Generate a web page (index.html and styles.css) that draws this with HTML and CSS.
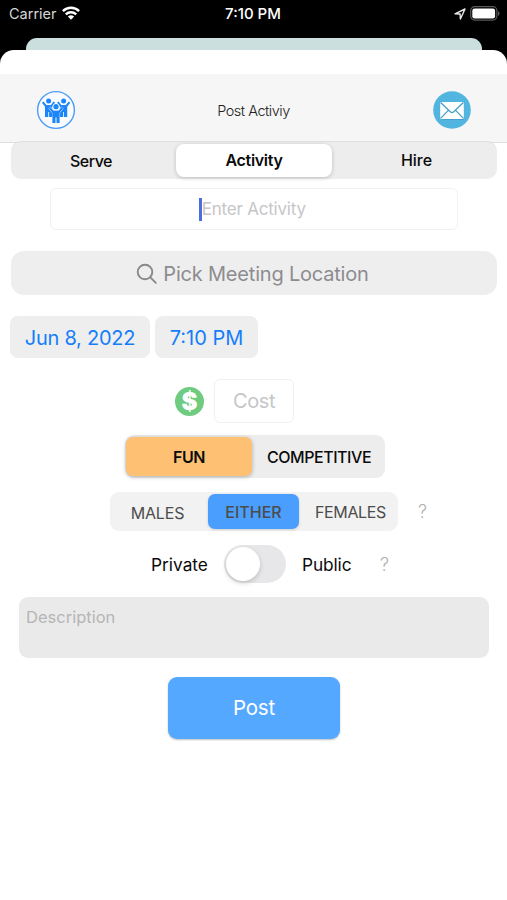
FILE: index.html
```html
<!DOCTYPE html>
<html lang="en">
<head>
<meta charset="utf-8">
<meta name="viewport" content="width=device-width, initial-scale=1">
<title>Post Activiy</title>
<link rel="stylesheet" href="styles.css">
</head>
<body>
<div class="status">
  <div class="status-left">
    <span class="carrier">Carrier</span>
    <svg class="wifi" viewBox="0 0 18 14" width="18" height="14">
      <g fill="none" stroke="#fff" stroke-width="2.4">
        <path d="M.9 5.1a11.6 11.6 0 0 1 16.2 0"/>
        <path d="M3.8 8.3a7.5 7.5 0 0 1 10.4 0"/>
      </g>
      <path d="M9 13.8 5.9 10.6a4.5 4.5 0 0 1 6.2 0z" fill="#fff"/>
    </svg>
  </div>
  <span class="clock">7:10 PM</span>
  <div class="status-right">
    <svg viewBox="0 0 12 12" width="12" height="12"><path d="M1 5.8 11 1 6.4 11 6.1 6z" fill="none" stroke="#e8e8e8" stroke-width="1.4" stroke-linejoin="round"/></svg>
    <svg viewBox="0 0 30 15" width="30" height="15">
      <rect x=".7" y=".7" width="26.2" height="13.4" rx="4" fill="none" stroke="#5a5a5a" stroke-width="1.2"/>
      <rect x="2.3" y="2.5" width="22.8" height="10" rx="2.3" fill="#fff"/>
      <path d="M28 5a2.8 2.8 0 0 1 0 5z" fill="#5a5a5a"/>
    </svg>
  </div>
</div>
<div class="card-behind"></div>
<main class="sheet">
  <header class="navbar">
    <svg class="people" viewBox="0 0 40 40" width="40" height="40">
      <circle cx="20" cy="20" r="18.4" fill="#f9fbfe" stroke="#4a9cf7" stroke-width="1.4"/>
      <g fill="#1b86f9" stroke="#1b86f9">
        <circle cx="12.6" cy="11" r="2.5" stroke="none"/>
        <circle cx="27.6" cy="11" r="2.5" stroke="none"/>
        <path d="M6.7 12.2 10 16.2h5.4l3-4M33.5 12.2l-3.3 4h-5.4l-3-4" fill="none" stroke-width="2"/>
        <path d="M9 15.3h7.3V27h-3.2v-5h-.8v5H9zM23.9 15.3h7.3V27H28v-5h-.8v5h-3.3z" stroke="none"/>
      </g>
      <circle cx="20" cy="16.7" r="3.5" fill="#fff"/>
      <circle cx="20" cy="16.7" r="2.6" fill="#1b86f9"/>
      <path d="m13.5 17.6 3.6 4.2h5.8l3.6-4.2" fill="none" stroke="#d6e8fd" stroke-width="3"/>
      <path d="m13.5 17.6 3.6 4.2h5.8l3.6-4.2" fill="none" stroke="#1b86f9" stroke-width="2"/>
      <path d="M16.4 20.9h7.2v12.2h-3.1v-5.5h-1v5.5h-3.1z" fill="#1b86f9"/>
    </svg>
    <h1 class="title">Post Activiy</h1>
    <svg class="mail" viewBox="0 0 38 38" width="38" height="38">
      <circle cx="19" cy="19" r="18.8" fill="#52b5e0"/>
      <path d="M9 26.5h22v2.6H11z" fill="#449fd0"/>
      <rect x="7.2" y="11" width="23.6" height="17" rx=".8" fill="#fff"/>
      <path d="m7.6 11.5 9.7 9.3q1.7 1.4 3.4 0l9.7-9.3M7.6 27.4l7.5-7.8M30.4 27.4l-7.5-7.8" fill="none" stroke="#459fcc" stroke-width="1.3"/>
    </svg>
  </header>
  <nav class="tabs">
    <span class="tab serve">Serve</span>
    <span class="tab selected">Activity</span>
    <span class="tab hire">Hire</span>
  </nav>
  <div class="activity-field"><i class="caret"></i><span>Enter Activity</span></div>
  <div class="search">
    <svg viewBox="0 0 22 22" width="22" height="22"><g fill="none" stroke="#88888c" stroke-width="1.9" stroke-linecap="round"><circle cx="9" cy="9" r="7.3"/><path d="m14.4 14.4 5.4 5.4"/></g></svg>
    <span>Pick Meeting Location</span>
  </div>
  <div class="datetime">
    <span class="chip date">Jun 8, 2022</span>
    <span class="chip time">7:10 PM</span>
  </div>
  <div class="cost-row">
    <span class="dollar">$</span>
    <div class="cost-field">Cost</div>
  </div>
  <div class="mode">
    <span class="mode-on">FUN</span>
    <span class="mode-off">COMPETITIVE</span>
  </div>
  <div class="gender-row">
    <div class="gender">
      <span class="g-cell males">MALES</span>
      <span class="g-cell either">EITHER</span>
      <span class="g-cell females">FEMALES</span>
    </div>
    <span class="help">?</span>
  </div>
  <div class="privacy-row">
    <span class="private">Private</span>
    <span class="switch"><i class="knob"></i></span>
    <span class="public">Public</span>
    <span class="help">?</span>
  </div>
  <div class="description">Description</div>
  <div class="post">Post</div>
</main>
</body>
</html>
```
FILE: styles.css
```css
* { box-sizing: border-box; }
body {
  margin: 0;
  width: 507px;
  height: 900px;
  overflow: hidden;
  background: #000;
  font-family: Inter, "Liberation Sans", sans-serif;
  color: #0b0b0b;
  display: flex;
  flex-direction: column;
  white-space: nowrap;
}
svg { display: block; flex: none; }

.status {
  height: 38px;
  padding: 0 7px 11px 9px;
  display: grid;
  grid-template-columns: 1fr auto 1fr;
  align-items: center;
  color: #fff;
}
.status-left, .status-right { display: flex; align-items: center; }
.status-left { gap: 5px; }
.status-right { justify-content: flex-end; gap: 4px; }
.wifi { margin-top: -1px; }
.carrier { font-size: 14.5px; color: #d6d6d6; }
.clock { font-size: 15px; font-weight: 500; margin: 0 1px 0 -2px; }

.card-behind {
  height: 12px;
  margin: 0 25px 0 26px;
  background: #cbdfde;
  border-radius: 11px 11px 0 0;
}
.sheet {
  height: 850px;
  background: #fff;
  border-radius: 14px 14px 0 0;
  padding-top: 24px;
  display: flex;
  flex-direction: column;
}
.navbar {
  height: 69px;
  flex: none;
  background: #f6f6f6;
  border-bottom: 1px solid #dedede;
  padding: 3px 36px 0;
  display: grid;
  grid-template-columns: 1fr auto 1fr;
  align-items: center;
}
.title { margin: 1px 0 0; font-size: 14.5px; font-weight: 300; letter-spacing: -.5px; color: #222; }
.mail { justify-self: end; }

.tabs {
  height: 38px;
  flex: none;
  margin: -2px 10px 0 11px;
  padding: 2px;
  border-radius: 10px;
  background: #ededed;
  border-top: 1px solid #dfdfdf;
  display: grid;
  grid-template-columns: 163px 156px 1fr;
  font-size: 16px;
  font-weight: 500;
}
.tab { display: flex; align-items: center; justify-content: center; padding-bottom: 2px; }
.serve { padding: 0 7px 0 0; letter-spacing: -.5px; }
.hire { padding-left: 6px; }
.selected {
  background: #fff;
  border-radius: 8px;
  font-weight: 600;
  letter-spacing: -.3px;
  box-shadow: 0 1px 4px rgba(0, 0, 0, .2);
}

.activity-field {
  height: 42px;
  flex: none;
  margin: 9px 49px 0 50px;
  padding-right: 3px;
  border: 1.5px solid #f1f1f1;
  border-radius: 6px;
  display: flex;
  align-items: center;
  justify-content: center;
  font-size: 17px;
  letter-spacing: -.2px;
  color: #c6c6c8;
}
.caret { width: 2.5px; height: 23px; background: #4a6ee0; }

.search {
  height: 44px;
  flex: none;
  margin: 21px 10px 0 11px;
  padding: 2px 3px 0 0;
  border-radius: 13px;
  background: #eee;
  display: flex;
  align-items: center;
  justify-content: center;
  gap: 5px;
  font-size: 20px;
  letter-spacing: -.2px;
  color: #8c8c90;
}

.datetime { display: flex; gap: 5px; margin: 21px 0 0 10px; }
.chip {
  height: 42px;
  padding-top: 2px;
  border-radius: 8px;
  background: #eee;
  display: flex;
  align-items: center;
  justify-content: center;
  font-size: 20px;
  color: #147efb;
}
.date { width: 140px; letter-spacing: -.25px; }
.time { width: 103px; }

.cost-row { display: flex; align-items: center; gap: 10px; margin: 21px 0 0 175px; }
.dollar {
  width: 29px;
  height: 29px;
  border-radius: 50%;
  background: #6fcb80;
  color: #fff;
  font-size: 24px;
  font-weight: 900;
  line-height: 29px;
  text-align: center;
}
.cost-field {
  width: 80px;
  height: 44px;
  border: 1.5px solid #f0f0f0;
  border-radius: 6px;
  display: flex;
  align-items: center;
  justify-content: center;
  font-size: 20px;
  letter-spacing: -.4px;
  color: #c6c6c8;
}

.mode {
  width: 260px;
  height: 43px;
  flex: none;
  margin: 12px 0 0 125px;
  padding: 2px 1px;
  border-radius: 9px;
  background: #ededed;
  display: flex;
  font-size: 16px;
  font-weight: 500;
}
.mode-on, .mode-off { display: flex; align-items: center; justify-content: center; }
.mode-on {
  width: 126px;
  background: #fec173;
  border-radius: 7px;
  font-weight: 600;
  letter-spacing: -.4px;
  box-shadow: 0 1px 4px rgba(0, 0, 0, .28);
}
.mode-off { flex: 1; padding-left: 2px; letter-spacing: -.45px; }

.gender-row { display: flex; align-items: center; margin: 14px 0 0 110px; }
.gender {
  width: 288px;
  height: 39px;
  padding: 2px 0;
  border-radius: 9px;
  background: #f2f2f2;
  display: grid;
  grid-template-columns: 98px 91px 1fr;
  font-size: 16px;
  color: #4c4c4c;
}
.g-cell { display: flex; align-items: center; justify-content: center; }
.males { padding: 2px 3px 0 0; letter-spacing: -.2px; }
.either {
  background: #4a9efe;
  border-radius: 7px;
  font-weight: 500;
  box-shadow: 0 1px 3px rgba(0, 0, 0, .15);
}
.females { padding-left: 4px; letter-spacing: -.35px; }
.help { font-size: 18px; font-weight: 300; color: #b0b0b0; }
.gender-row .help { margin-left: 20px; }

.privacy-row { display: flex; align-items: center; height: 38px; margin: 14px 0 0 151px; font-size: 17.3px; }
.private { width: 58px; }
.public { width: 49px; margin-left: 16px; letter-spacing: -.1px; }
.switch {
  width: 62px;
  height: 38px;
  margin-left: 15px;
  padding: 2px;
  border-radius: 19px;
  background: #e7e7e9;
}
.knob {
  display: block;
  width: 34px;
  height: 34px;
  border-radius: 50%;
  background: #fff;
  box-shadow: 0 2px 5px rgba(0, 0, 0, .18);
}
.privacy-row .help { margin-left: 29px; }

.description {
  height: 61px;
  flex: none;
  margin: 14px 18px 0 19px;
  padding: 10px 7px;
  border-radius: 9px;
  background: #eaeaea;
  font-size: 16.5px;
  line-height: 21px;
  color: #b5b5b5;
}
.post {
  width: 172px;
  height: 62px;
  flex: none;
  margin: 19px 0 0 168px;
  padding-bottom: 2px;
  border-radius: 9px;
  background: #54a8ff;
  box-shadow: 0 1px 2px rgba(0, 0, 0, .25);
  display: flex;
  align-items: center;
  justify-content: center;
  font-size: 20.5px;
  letter-spacing: -.2px;
  color: #fff;
}
```
